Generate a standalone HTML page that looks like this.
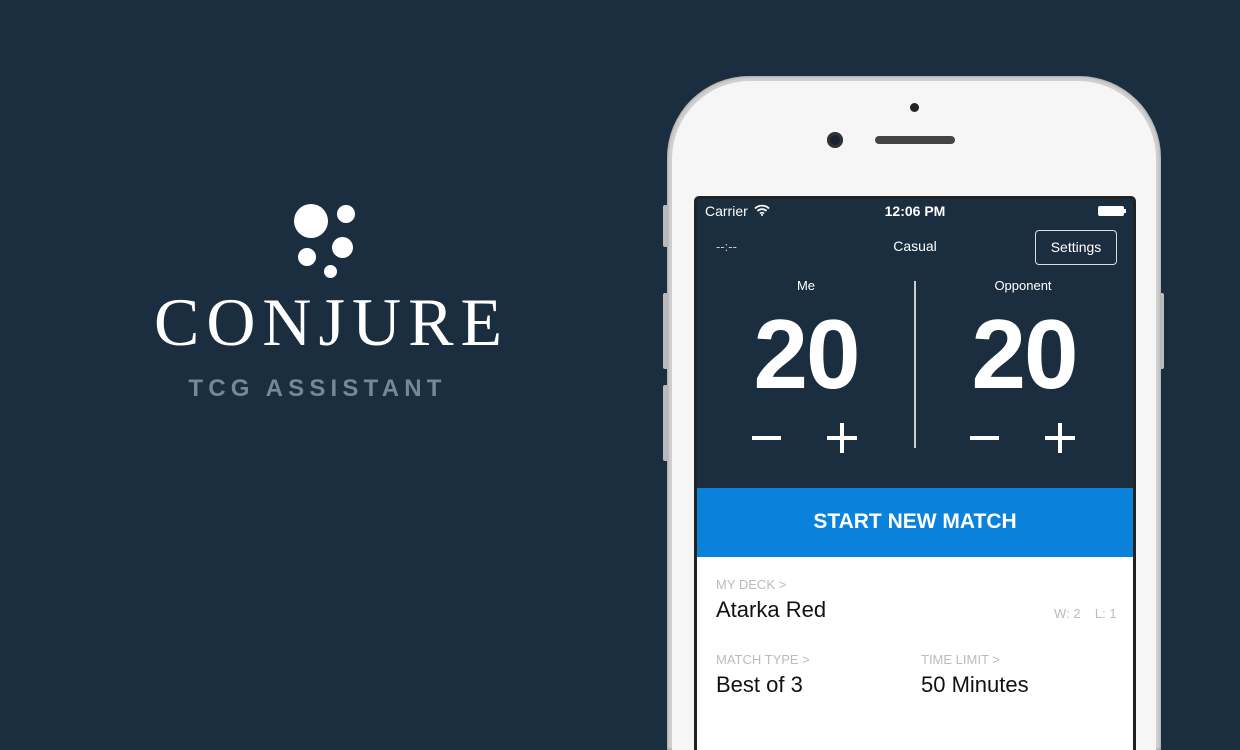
<!DOCTYPE html>
<html style="width:1240px;height:750px;overflow:hidden"><head><style>
*{margin:0;padding:0;box-sizing:border-box}
body{width:1240px;height:750px;background:#1b2e3f;position:relative;overflow:hidden;font-family:"Liberation Sans",sans-serif}
.a{position:absolute;white-space:nowrap}
.dot{position:absolute;background:#fff;border-radius:50%}
</style></head><body>
<div class="dot" style="left:294px;top:204px;width:34px;height:34px"></div>
<div class="dot" style="left:337px;top:205px;width:18px;height:18px"></div>
<div class="dot" style="left:332px;top:237px;width:21px;height:21px"></div>
<div class="dot" style="left:298px;top:248px;width:18px;height:18px"></div>
<div class="dot" style="left:324px;top:265px;width:13px;height:13px"></div>
<div class="a" style="left:128px;top:282px;width:400px;text-align:center;font-family:'Liberation Serif',serif;font-size:68px;color:#fff;letter-spacing:7px;text-indent:7px;line-height:80px">CONJURE</div>
<div class="a" style="left:170px;top:374px;width:290px;text-align:center;font-weight:bold;font-size:24px;color:#768796;letter-spacing:5.2px;text-indent:5px;line-height:30px">TCG ASSISTANT</div>

<div class="a" style="left:663px;top:205px;width:6px;height:42px;background:#bbb;border-radius:2px"></div>
<div class="a" style="left:663px;top:293px;width:6px;height:76px;background:#bbb;border-radius:2px"></div>
<div class="a" style="left:663px;top:385px;width:6px;height:76px;background:#bbb;border-radius:2px"></div>
<div class="a" style="left:1158px;top:293px;width:6px;height:76px;background:#bbb;border-radius:2px"></div>
<div class="a" style="left:667px;top:76px;width:494px;height:674px;border-radius:82px 82px 0 0;background:#d0d0d0;box-shadow:inset 0 0 3px #888"></div>
<div class="a" style="left:672px;top:81px;width:484px;height:669px;border-radius:78px 78px 0 0;background:#f6f6f6"></div>
<div class="dot" style="left:910px;top:103px;width:9px;height:9px;background:#222"></div>
<div class="dot" style="left:827px;top:132px;width:16px;height:16px;background:#1a2233;box-shadow:inset 0 0 0 3px #333"></div>
<div class="a" style="left:875px;top:136px;width:80px;height:8px;border-radius:4px;background:#444"></div>
<div class="a" style="left:694px;top:196px;width:442px;height:554px;background:#222;border-radius:5px 5px 0 0"></div>
<div class="a" style="left:697px;top:199px;width:436px;height:551px;background:#1b2e3f"></div>
<div class="a" style="left:705px;top:203px;font-size:14px;color:#fff">Carrier</div>
<svg class="a" style="left:754px;top:204px" width="16" height="12" viewBox="0 0 16 12"><path d="M1 4.5a10 10 0 0 1 14 0M3.5 7a6.5 6.5 0 0 1 9 0M6 9.5a3 3 0 0 1 4 0" stroke="#fff" stroke-width="1.8" fill="none"/><circle cx="8" cy="11" r="1" fill="#fff"/></svg>
<div class="a" style="left:855px;top:203px;width:120px;text-align:center;font-size:14px;font-weight:bold;color:#fff">12:06 PM</div>
<div class="a" style="left:1098px;top:206px;width:26px;height:10px;background:#fff;border-radius:2px"></div>
<div class="a" style="left:1124px;top:209px;width:2px;height:4px;background:#fff"></div>
<div class="a" style="left:716px;top:239px;font-size:13px;color:#ccc">--:--</div>
<div class="a" style="left:865px;top:238px;width:100px;text-align:center;font-size:14px;color:#fff">Casual</div>
<div class="a" style="left:1035px;top:230px;width:82px;height:35px;border:1.5px solid #ddd;border-radius:4px;color:#fff;font-size:14px;text-align:center;line-height:32px">Settings</div>
<div class="a" style="left:756px;top:278px;width:100px;text-align:center;font-size:13px;color:#fff">Me</div>
<div class="a" style="left:973px;top:278px;width:100px;text-align:center;font-size:13px;color:#fff">Opponent</div>
<div class="a" style="left:914px;top:281px;width:2px;height:167px;background:#ccc"></div>
<div class="a" style="left:726px;top:300px;width:160px;text-align:center;font-size:98px;font-weight:bold;color:#fff;line-height:108px;letter-spacing:-2px">20</div>
<div class="a" style="left:944px;top:300px;width:160px;text-align:center;font-size:98px;font-weight:bold;color:#fff;line-height:108px;letter-spacing:-2px">20</div>
<div class="a" style="left:752px;top:436px;width:29px;height:4px;background:#fff"></div>
<div class="a" style="left:827px;top:436px;width:30px;height:4px;background:#fff"></div>
<div class="a" style="left:840px;top:423px;width:4px;height:30px;background:#fff"></div>
<div class="a" style="left:970px;top:436px;width:29px;height:4px;background:#fff"></div>
<div class="a" style="left:1045px;top:436px;width:30px;height:4px;background:#fff"></div>
<div class="a" style="left:1058px;top:423px;width:4px;height:30px;background:#fff"></div>
<div class="a" style="left:697px;top:488px;width:436px;height:69px;background:#0a82dc;color:#fff;font-weight:bold;font-size:21px;text-align:center;line-height:68px">START NEW MATCH</div>
<div class="a" style="left:697px;top:557px;width:436px;height:193px;background:#fff"></div>
<div class="a" style="left:716px;top:577px;font-size:13px;color:#bbb">MY DECK &gt;</div>
<div class="a" style="left:716px;top:597px;font-size:22px;color:#111">Atarka Red</div>
<div class="a" style="left:1054px;top:606px;font-size:13px;color:#bbb">W:&nbsp;2&nbsp;&nbsp;&nbsp;&nbsp;L:&nbsp;1</div>
<div class="a" style="left:716px;top:652px;font-size:13px;color:#bbb">MATCH TYPE &gt;</div>
<div class="a" style="left:921px;top:652px;font-size:13px;color:#bbb">TIME LIMIT &gt;</div>
<div class="a" style="left:716px;top:672px;font-size:22px;color:#111">Best of 3</div>
<div class="a" style="left:921px;top:672px;font-size:22px;color:#111">50 Minutes</div>
</body></html>
